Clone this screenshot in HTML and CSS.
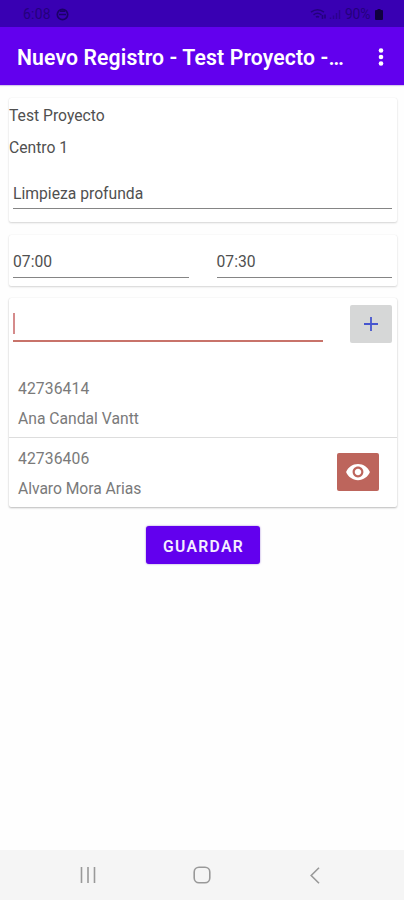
FILE: index.html
```html
<!DOCTYPE html>
<html lang="es">
<head>
<meta charset="utf-8">
<title>Nuevo Registro</title>
<link rel="stylesheet" href="styles.css">
</head>
<body>
<div class="status">
  <span class="clock">6:08</span>
  <svg class="dnd" width="13" height="13" viewBox="0 0 13 13"><circle cx="6.5" cy="6.5" r="5.2"/><path d="M3 6.5h7M4 3.2h5"/></svg>
  <svg class="signal" width="31" height="13" viewBox="0 0 31 13"><path class="wifi" d="M1 4.2Q7.500 -.8 14 4.200M3.500 6.800Q7.500 3.600 11.500 6.800M6 9.200Q7.500 8 9 9.200M12.500 7v4M15 6.500v4"/><path class="bars" d="M20.500 11V9.500M23.500 11V7.500M26.500 11V5M29.500 11V2"/></svg>
  <span class="percent">90%</span>
  <svg class="battery" width="8" height="11" viewBox="0 0 8 11"><path d="M2.500 0h3v1H7q1 0 1 1v8q0 1-1 1H1q-1 0-1-1V2q0-1 1-1h1.500z"/></svg>
</div>
<header class="appbar">
  <h1>Nuevo Registro - Test Proyecto -…</h1>
  <svg width="6" height="18" viewBox="0 0 6 18"><circle cx="3" cy="2.500" r="2.300"/><circle cx="3" cy="9" r="2.300"/><circle cx="3" cy="15.500" r="2.300"/></svg>
</header>
<main>
  <section class="card project">
    <p class="name">Test Proyecto</p>
    <p class="center">Centro 1</p>
    <div class="field task">Limpieza profunda</div>
  </section>
  <section class="card times">
    <div class="field">07:00</div>
    <div class="field">07:30</div>
  </section>
  <section class="card people">
    <div class="entry">
      <div class="input"><span class="caret"></span></div>
      <div class="add"><svg width="16" height="16" viewBox="0 0 16 16"><path d="M8 1v14M1 8h14"/></svg></div>
    </div>
    <div class="person">
      <div><p class="number">42736414</p><p class="fullname">Ana Candal Vantt</p></div>
    </div>
    <div class="person last">
      <div><p class="number">42736406</p><p class="fullname alt">Alvaro Mora Arias</p></div>
      <div class="view"><svg width="26" height="26" viewBox="0 0 24 24"><path d="M12 4.500C7 4.500 2.730 7.610 1 12c1.730 4.390 6 7.500 11 7.500s9.270-3.110 11-7.500c-1.730-4.390-6-7.500-11-7.500zM12 17c-2.760 0-5-2.240-5-5s2.240-5 5-5 5 2.240 5 5-2.240 5-5 5zm0-8c-1.660 0-3 1.340-3 3s1.340 3 3 3 3-1.340 3-3-1.340-3-3-3z"/></svg></div>
    </div>
  </section>
  <button class="save">GUARDAR</button>
</main>
<nav class="navbar">
  <svg width="16" height="16" viewBox="0 0 16 16"><path d="M1.500 0v16M8 0v16M14.500 0v16"/></svg>
  <svg class="home" width="18" height="18" viewBox="0 0 18 18"><rect x="1.200" y="1.200" width="15.600" height="15.600" rx="4.800"/></svg>
  <svg width="10" height="17" viewBox="0 0 10 17"><path d="M9 .7L1.200 8.500 9 16.300"/></svg>
</nav>
</body>
</html>
```
FILE: styles.css
```css
* { box-sizing: border-box; }
body {
  margin: 0;
  height: 900px;
  display: flex;
  flex-direction: column;
  background: #fefefe;
  color: #505050;
  font: 15.7px/20px Roboto, sans-serif;
  overflow: hidden;
}
p, h1 { margin: 0; white-space: nowrap; }
svg { display: block; flex: none; }

.status {
  height: 27px;
  flex: none;
  display: flex;
  align-items: center;
  padding: 1px 21px 0 23px;
  background: #3900b3;
  color: #24007c;
  font-size: 14px;
}
.clock { width: 33px; letter-spacing: .2px; }
.dnd { fill: none; stroke: #1b0068; stroke-width: 1.7; }
.signal { margin-left: auto; fill: none; stroke: #24007c; }
.wifi { stroke-width: 1.6; }
.bars { stroke-width: 1.5; stroke: #2c008e; }
.percent { margin: 0 2px 0 4px; width: 28px; font-size: 14px; letter-spacing: -.3px; }
.battery { fill: #100040; }

.appbar {
  height: 58px;
  flex: none;
  display: flex;
  align-items: center;
  justify-content: space-between;
  padding: 2px 20px 0 17px;
  background: #6200ee;
  color: #fff;
  box-shadow: 0 1px 1px #d5c8ea;
}
.appbar h1 { padding-top: 2px; font-size: 21.2px; line-height: 28px; font-weight: 600; letter-spacing: .12px; }
.appbar svg { fill: #fff; }

main {
  flex: 1;
  display: flex;
  flex-direction: column;
  padding: 13px 7px 0 9px;
}
.card {
  background: #fff;
  border-radius: 2px;
  box-shadow: 0 1px 2px #d4d4d4, 0 0 1px #e2e2e2;
}
.project { height: 124px; padding-top: 8px; }
.center { margin-top: 12px; }
.field { height: 25px; border-bottom: 1px solid #858585; }
.task { margin: 26px 5px 0 4px; }
.times {
  height: 51px;
  margin-top: 13px;
  padding: 17px 5px 0 4px;
  display: flex;
  gap: 28px;
}
.times .field { flex: 1; height: 26px; }
.people { height: 209px; margin-top: 12px; box-shadow: 0 1px 2px #bbb, 0 0 1px #ddd; }
.entry {
  height: 69px;
  display: flex;
  justify-content: space-between;
  align-items: flex-start;
  padding: 7px 5px 0 4px;
}
.input { width: 310px; height: 37px; padding-top: 8px; border-bottom: 2px solid #c8736a; }
.caret { display: block; width: 2px; height: 21px; background: #d58b8b; }
.add {
  width: 42px;
  height: 38px;
  display: grid;
  place-items: center;
  background: #d6d7d7;
  border-radius: 2px;
}
.add svg { fill: none; stroke: #4655cf; stroke-width: 1.8; }
.person {
  height: 71px;
  display: flex;
  justify-content: space-between;
  padding: 12px 18px 0 9px;
  border-bottom: 1px solid #ddd;
  color: #7a7a7a;
}
.last { height: 68px; padding-top: 11px; border-bottom: 0; }
.number { letter-spacing: .1px; }
.fullname { margin-top: 10px; }
.alt { letter-spacing: -.05px; }
.view {
  width: 42px;
  height: 38px;
  margin-top: 4px;
  display: grid;
  place-items: center;
  background: #bd655c;
  border-radius: 2px;
}
.view svg { fill: #fff; }
.save {
  align-self: center;
  width: 114px;
  height: 38px;
  margin-top: 19px;
  padding: 3px 0 0 1px;
  border: 0;
  border-radius: 3px;
  background: #6200ee;
  box-shadow: 0 0 2px #9875d6;
  color: #f4edff;
  font: 600 15.7px/20px Roboto, sans-serif;
  letter-spacing: 1.3px;
}
.navbar {
  height: 50px;
  flex: none;
  display: flex;
  align-items: center;
  justify-content: space-between;
  padding: 0 84px 0 80px;
  background: #f5f5f5;
}
.navbar svg { fill: none; stroke: #999; stroke-width: 1.6; }
.navbar .home { margin-right: 3px; }
```
